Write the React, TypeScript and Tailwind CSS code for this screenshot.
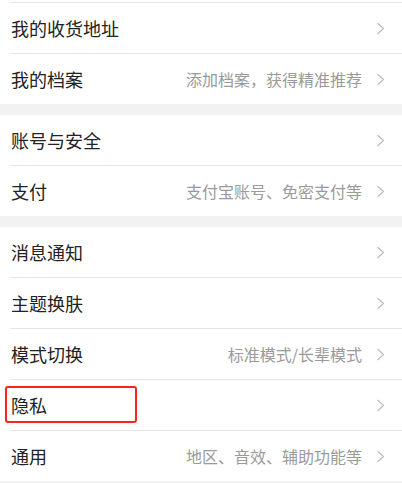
import React from "react";

type Item = { label: string; hint?: string; highlight?: boolean };

const sections: Item[][] = [
  [
    { label: "我的收货地址" },
    { label: "我的档案", hint: "添加档案，获得精准推荐" },
  ],
  [
    { label: "账号与安全" },
    { label: "支付", hint: "支付宝账号、免密支付等" },
  ],
  [
    { label: "消息通知" },
    { label: "主题换肤" },
    { label: "模式切换", hint: "标准模式/长辈模式" },
    { label: "隐私", highlight: true },
    { label: "通用", hint: "地区、音效、辅助功能等" },
  ],
];

function Chevron() {
  return (
    <svg width="9" height="13" viewBox="0 0 9 13" className="shrink-0">
      <path d="M1.5 1 L7.5 6.5 L1.5 12" fill="none" stroke="#bdbdbd" strokeWidth="1.2" />
    </svg>
  );
}

function Row({ item, first, topLine }: { item: Item; first: boolean; topLine?: boolean }) {
  return (
    <div className="pl-[10px]">
      {(!first || topLine) && <div className="h-px bg-[#e6e6e6]" />}
      <div className="relative h-[50px] flex items-center pl-px pr-[17px]">
        <span className="flex-1 text-[18px] leading-none text-[#222222]">{item.label}</span>
        {item.hint && (
          <span className="text-[16px] leading-none text-[#9a9a9a] mr-[14px]">{item.hint}</span>
        )}
        <Chevron />
        {item.highlight && (
          <div className="absolute left-[-5px] top-[6px] w-[132px] h-[37px] border-2 border-[#ff2020] rounded-[3px]" />
        )}
      </div>
    </div>
  );
}

export default function App() {
  return (
    <div
      className="w-[402px] h-[483px] overflow-hidden bg-[#f2f2f2]"
      style={{ fontFamily: '"Noto Sans CJK SC", "Noto Sans", sans-serif' }}
    >
      <div className="flex flex-col gap-[11px]">
        {sections.map((sec, si) => (
          <div key={si} className={`bg-white ${si === 0 ? "pt-[2px]" : ""}`}>
            {sec.map((item, i) => (
              <Row key={item.label} item={item} first={i === 0} topLine={si === 0} />
            ))}
          </div>
        ))}
      </div>
    </div>
  );
}
